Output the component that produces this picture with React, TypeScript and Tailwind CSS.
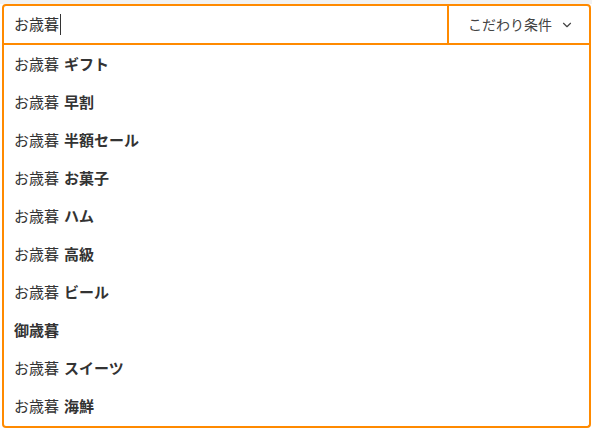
import { ChevronDown } from 'lucide-react';

const suggestions: { prefix?: string; rest: string }[] = [
  { prefix: 'お歳暮', rest: 'ギフト' },
  { prefix: 'お歳暮', rest: '早割' },
  { prefix: 'お歳暮', rest: '半額セール' },
  { prefix: 'お歳暮', rest: 'お菓子' },
  { prefix: 'お歳暮', rest: 'ハム' },
  { prefix: 'お歳暮', rest: '高級' },
  { prefix: 'お歳暮', rest: 'ビール' },
  { rest: '御歳暮' },
  { prefix: 'お歳暮', rest: 'スイーツ' },
  { prefix: 'お歳暮', rest: '海鮮' },
];

export default function App() {
  return (
    <div
      className="min-h-[431px] w-[592px] bg-white pt-1 text-[#333]"
      style={{ fontFamily: '"Noto Sans CJK JP", "Noto Sans", sans-serif' }}
    >
      <div className="absolute left-0 top-0 h-1 w-[592px] bg-[#f2f2f2]" />
      <div className="relative ml-[2px] w-[589px]">
        {/* 検索バー */}
        <div className="flex h-[41px] rounded-t-[4px] border-2 border-[#ff8a00] bg-white">
          <div className="flex flex-1 items-center pl-[10px] text-[15px]">
            <span>お歳暮</span>
            <span className="ml-[1px] h-[21px] w-px bg-[#333]" />
          </div>
          <button className="flex w-[142px] items-center gap-[8px] border-l-2 border-[#ff8a00] pl-[19px] text-[14px] text-[#444]">
            こだわり条件
            <ChevronDown className="h-[14px] w-[14px] text-[#444]" strokeWidth={2} />
          </button>
        </div>

        {/* 候補リスト */}
        <ul className="rounded-b-[4px] border-x-2 border-b-2 border-[#ff8a00] bg-white pb-[1px]">
          {suggestions.map((s, i) => (
            <li key={i} className="flex h-[38px] items-center pl-[10px] text-[15px]">
              {s.prefix && <span className="mr-[5px]">{s.prefix}</span>}
              <span className="font-bold">{s.rest}</span>
            </li>
          ))}
        </ul>
      </div>
    </div>
  );
}
